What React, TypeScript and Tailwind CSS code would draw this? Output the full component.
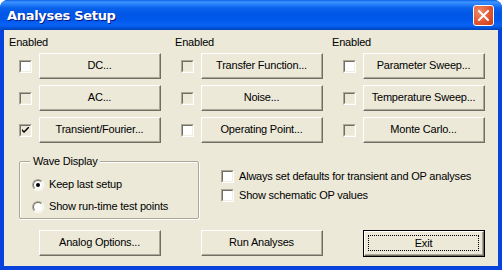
import React from "react";

function Check({ white = false, checked = false }: { white?: boolean; checked?: boolean }) {
  return (
    <div className="h-[13px] w-[13px] shrink-0 border-t border-l border-t-[#aca899] border-l-[#aca899] border-b border-r border-b-white border-r-white">
      <div
        className={
          white
            ? "h-full w-full border-t border-l border-t-[#716f64] border-l-[#716f64] border-b border-r border-b-[#f1efe2] border-r-[#f1efe2] bg-white flex items-center justify-center"
            : "h-full w-full border-t border-l border-t-[#716f64] border-l-[#716f64] border-b border-r border-b-[#f1efe2] border-r-[#f1efe2] bg-[#ece9d8] flex items-center justify-center"
        }
      >
        {checked && (
          <svg width="7" height="7" viewBox="0 0 7 7">
            <path d="M0 2 L0 4 L2 6 L7 1 L7 -1 L2 4 Z" fill="#000" />
          </svg>
        )}
      </div>
    </div>
  );
}

function Btn({ label, def = false }: { label: string; def?: boolean }) {
  if (def) {
    return (
      <div className="h-[27px] w-[122px] border border-black">
        <div className="h-full w-full border-t border-l border-white border-b border-r border-b-[#716f64] border-r-[#716f64]">
          <div className="h-full w-full border-b border-r border-b-[#aca899] border-r-[#aca899] p-[3px]">
            <div className="h-full w-full border border-dotted border-black flex items-center justify-center text-black">
              {label}
            </div>
          </div>
        </div>
      </div>
    );
  }
  return (
    <div className="h-[26px] w-[122px] border-t border-l border-white border-b border-r border-b-[#716f64] border-r-[#716f64]">
      <div className="h-full w-full border-b border-r border-b-[#aca899] border-r-[#aca899] flex items-center justify-center text-black">
        {label}
      </div>
    </div>
  );
}

function Row({ label, white = false, checked = false }: { label: string; white?: boolean; checked?: boolean }) {
  return (
    <div className="flex items-center">
      <div className="ml-[15px]">
        <Check white={white} checked={checked} />
      </div>
      <div className="ml-[7px]">
        <Btn label={label} />
      </div>
    </div>
  );
}

function Radio({ on = false }: { on?: boolean }) {
  return (
    <div className="h-[12px] w-[12px] rounded-full border border-t-[#aca899] border-l-[#aca899] border-b-white border-r-white">
      <div className="h-full w-full rounded-full border border-t-[#716f64] border-l-[#716f64] border-b-[#f1efe2] border-r-[#f1efe2] bg-white flex items-center justify-center">
        {on && <div className="h-[4px] w-[4px] rounded-full bg-black" />}
      </div>
    </div>
  );
}

export default function App() {
  return (
    <div className="w-[502px] h-[270px] bg-white font-['Liberation_Sans',Arial,sans-serif] text-[11px] leading-[13px] tracking-[-0.2px] text-black">
      <div className="w-full h-full rounded-t-[8px] overflow-hidden flex flex-col bg-[#0842dc]">
        {/* Title bar */}
        <div className="h-[30px] shrink-0 flex items-center justify-between pl-[7px] pr-[8px] bg-[linear-gradient(to_bottom,#0a5fe8_0px,#3d95ff_2px,#2a84fb_4px,#0a62eb_8px,#0055e5_14px,#0058ec_20px,#0a63f5_25px,#0052d8_28px,#0040b8_30px)]">
          <span className="text-white font-bold text-[13px] font-['DejaVu_Sans','Liberation_Sans',sans-serif] tracking-[-0.3px] [text-shadow:1px_1px_0_#0a1883]">
            Analyses Setup
          </span>
          <div className="h-[21px] w-[21px] rounded-[3px] border border-white bg-[radial-gradient(circle_at_30%_30%,#f08a66,#e0532e_60%,#c33d16)] flex items-center justify-center">
            <svg width="11" height="11" viewBox="0 0 11 11">
              <path d="M1 1 L10 10 M10 1 L1 10" stroke="#fff" strokeWidth="2" strokeLinecap="square" />
            </svg>
          </div>
        </div>
        {/* Client */}
        <div className="flex-1 mx-[4px] mb-[4px] bg-[#ece9d8] flex flex-col">
          <div className="flex pt-[6px]">
            <div className="w-[162px] flex flex-col">
              <div className="ml-[5px] h-[13px]">Enabled</div>
              <div className="mt-[4px] flex flex-col gap-[6px]">
                <Row label="DC..." white />
                <Row label="AC..." />
                <Row label="Transient/Fourier..." checked />
              </div>
            </div>
            <div className="w-[162px] flex flex-col">
              <div className="ml-[9px] h-[13px]">Enabled</div>
              <div className="mt-[4px] flex flex-col gap-[6px]">
                <Row label="Transfer Function..." />
                <Row label="Noise..." />
                <Row label="Operating Point..." white />
              </div>
            </div>
            <div className="w-[162px] flex flex-col">
              <div className="ml-[4px] h-[13px]">Enabled</div>
              <div className="mt-[4px] flex flex-col gap-[6px]">
                <Row label="Parameter Sweep..." white />
                <Row label="Temperature Sweep..." />
                <Row label="Monte Carlo..." />
              </div>
            </div>
          </div>

          <div className="flex mt-[18px]">
            <div className="ml-[15px] relative h-[58px] w-[180px] border border-[#aca899] shadow-[inset_1px_1px_0_#fff,1px_1px_0_#fff] rounded-[2px]">
              <div className="absolute left-[10px] top-[-7px] bg-[#ece9d8] px-[3px]">Wave Display</div>
              <div className="flex flex-col pl-[12px] pt-[16px] gap-[9px]">
                <div className="flex items-center gap-[5px]">
                  <Radio on />
                  <span>Keep last setup</span>
                </div>
                <div className="flex items-center gap-[5px]">
                  <Radio />
                  <span>Show run-time test points</span>
                </div>
              </div>
            </div>
            <div className="ml-[22px] flex flex-col pt-[9px] gap-[6px]">
              <div className="flex items-center gap-[5px]">
                <Check white />
                <span>Always set defaults for transient and OP analyses</span>
              </div>
              <div className="flex items-center gap-[5px]">
                <Check white />
                <span>Show schematic OP values</span>
              </div>
            </div>
          </div>

          <div className="flex mt-[11px] pl-[35px] gap-[40px]">
            <Btn label="Analog Options..." />
            <Btn label="Run Analyses" />
            <Btn label="Exit" def />
          </div>
        </div>
      </div>
    </div>
  );
}
